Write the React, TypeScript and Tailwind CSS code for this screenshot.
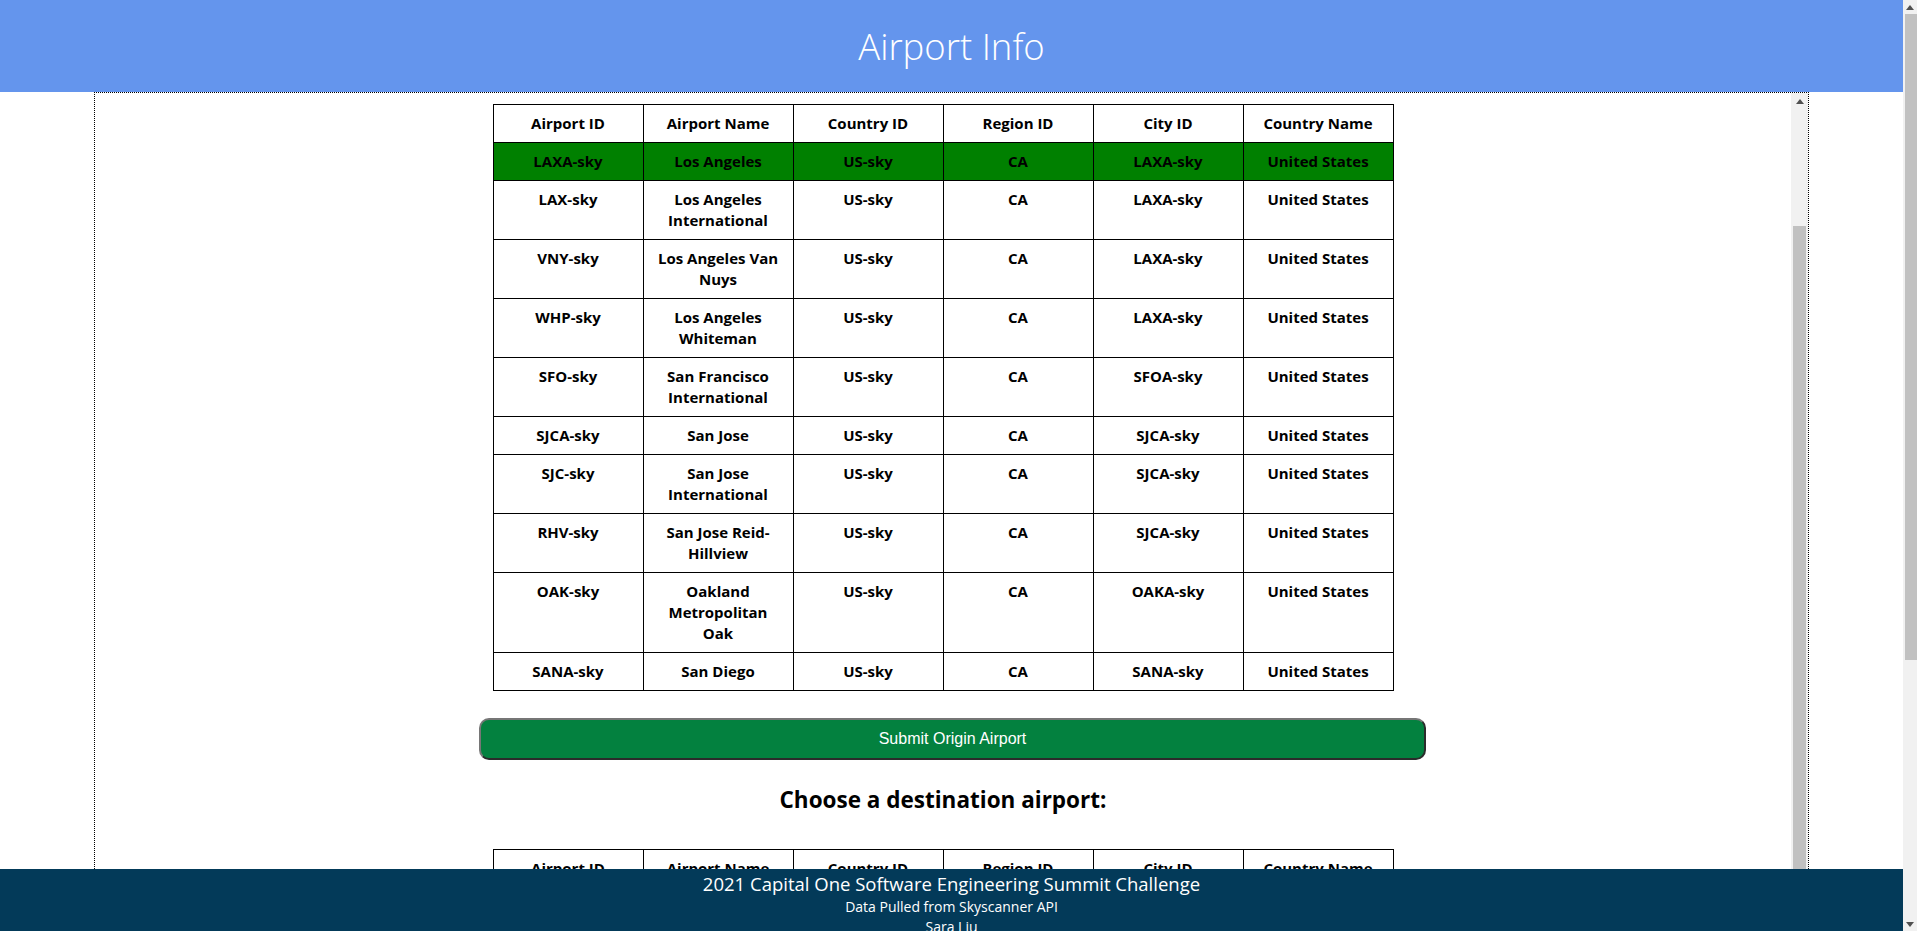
import React from "react";

type Airport = {
  id: string;
  name: string[];
  country: string;
  region: string;
  city: string;
  countryName: string;
};

const origins: Airport[] = [
  { id: "LAXA-sky", name: ["Los Angeles"], country: "US-sky", region: "CA", city: "LAXA-sky", countryName: "United States" },
  { id: "LAX-sky", name: ["Los Angeles", "International"], country: "US-sky", region: "CA", city: "LAXA-sky", countryName: "United States" },
  { id: "VNY-sky", name: ["Los Angeles Van", "Nuys"], country: "US-sky", region: "CA", city: "LAXA-sky", countryName: "United States" },
  { id: "WHP-sky", name: ["Los Angeles", "Whiteman"], country: "US-sky", region: "CA", city: "LAXA-sky", countryName: "United States" },
  { id: "SFO-sky", name: ["San Francisco", "International"], country: "US-sky", region: "CA", city: "SFOA-sky", countryName: "United States" },
  { id: "SJCA-sky", name: ["San Jose"], country: "US-sky", region: "CA", city: "SJCA-sky", countryName: "United States" },
  { id: "SJC-sky", name: ["San Jose", "International"], country: "US-sky", region: "CA", city: "SJCA-sky", countryName: "United States" },
  { id: "RHV-sky", name: ["San Jose Reid-", "Hillview"], country: "US-sky", region: "CA", city: "SJCA-sky", countryName: "United States" },
  { id: "OAK-sky", name: ["Oakland", "Metropolitan", "Oak"], country: "US-sky", region: "CA", city: "OAKA-sky", countryName: "United States" },
  { id: "SANA-sky", name: ["San Diego"], country: "US-sky", region: "CA", city: "SANA-sky", countryName: "United States" },
];

const headers = ["Airport ID", "Airport Name", "Country ID", "Region ID", "City ID", "Country Name"];

const cell = "border border-black px-2 py-2 align-top text-center font-bold";

const AirportTable = ({ rows, selected }: { rows: Airport[]; selected?: string }) => {
  return (
    <table className="table-fixed border-collapse w-[901px] mx-auto text-[15px] leading-[21px] text-black">
      <thead>
        <tr>
          {headers.map((h) => (
            <th key={h} className={cell}>
              {h}
            </th>
          ))}
        </tr>
      </thead>
      <tbody>
        {rows.map((a) => (
          <tr key={a.id} className={a.id === selected ? "bg-[#008000]" : ""}>
            <td className={cell}>{a.id}</td>
            <td className={cell}>
              {a.name.map((line, i) => (
                <div key={i}>{line}</div>
              ))}
            </td>
            <td className={cell}>{a.country}</td>
            <td className={cell}>{a.region}</td>
            <td className={cell}>{a.city}</td>
            <td className={cell}>{a.countryName}</td>
          </tr>
        ))}
      </tbody>
    </table>
  );
};

const UpArrow = () => (
  <svg width="8" height="5" viewBox="0 0 8 5">
    <path d="M4 0 L8 5 L0 5 Z" fill="#505050" />
  </svg>
);

const DownArrow = () => (
  <svg width="8" height="5" viewBox="0 0 8 5">
    <path d="M0 0 L8 0 L4 5 Z" fill="#505050" />
  </svg>
);

const App = () => {
  return (
    <div className="h-[931px] flex overflow-hidden bg-white font-['Open_Sans',sans-serif]">
      <div className="flex-1 min-w-0 flex flex-col">
        {/* header */}
        <header className="h-[92px] shrink-0 bg-[#6495ed] flex items-center justify-center">
          <h1 className="text-[36.5px] font-light text-white">Airport Info</h1>
        </header>

        {/* scroll box */}
        <div className="flex-1 min-h-0 mx-[94px] border border-b-0 border-dotted border-black flex">
          <div className="flex-1 min-w-0 overflow-hidden pt-[11px] flex flex-col">
            <AirportTable rows={origins} selected="LAXA-sky" />

            <button className="mt-[27px] ml-[384px] w-[947px] h-[42px] shrink-0 rounded-[10px] border-2 border-t-[#767676] border-l-[#767676] border-b-[#2b2b2b] border-r-[#2b2b2b] bg-[#03813f] text-white text-[16px] font-['Liberation_Sans',Arial,sans-serif]">
              Submit Origin Airport
            </button>

            <h2 className="mt-[24px] text-center text-[22.5px] leading-[32px] font-bold text-black">
              Choose a destination airport:
            </h2>

            <div className="mt-[33px]">
              <AirportTable rows={origins.slice(1, 4)} />
            </div>
          </div>

          {/* inner scrollbar */}
          <div className="w-[17px] shrink-0 bg-[#f1f1f1] flex flex-col">
            <div className="h-[17px] flex items-center justify-center">
              <UpArrow />
            </div>
            <div className="mt-[116px] mx-[2px] flex-1 bg-[#c1c1c1]" />
          </div>
        </div>

        {/* footer */}
        <footer className="h-[62px] shrink-0 pt-[2px] bg-[#033a59] text-white text-center overflow-hidden">
          <p className="text-[18.5px] leading-[26px]">2021 Capital One Software Engineering Summit Challenge</p>
          <p className="text-[14px] leading-[20px]">Data Pulled from Skyscanner API</p>
          <p className="text-[14px] leading-[20px]">Sara Liu</p>
        </footer>
      </div>

      {/* page scrollbar */}
      <div className="w-[14px] shrink-0 bg-[#f1f1f1] flex flex-col">
        <div className="h-[14px] flex items-center justify-center">
          <UpArrow />
        </div>
        <div className="ml-[2px] h-[646px] bg-[#c1c1c1]" />
        <div className="flex-1" />
        <div className="h-[14px] flex items-center justify-center">
          <DownArrow />
        </div>
      </div>
    </div>
  );
};

export default App;
